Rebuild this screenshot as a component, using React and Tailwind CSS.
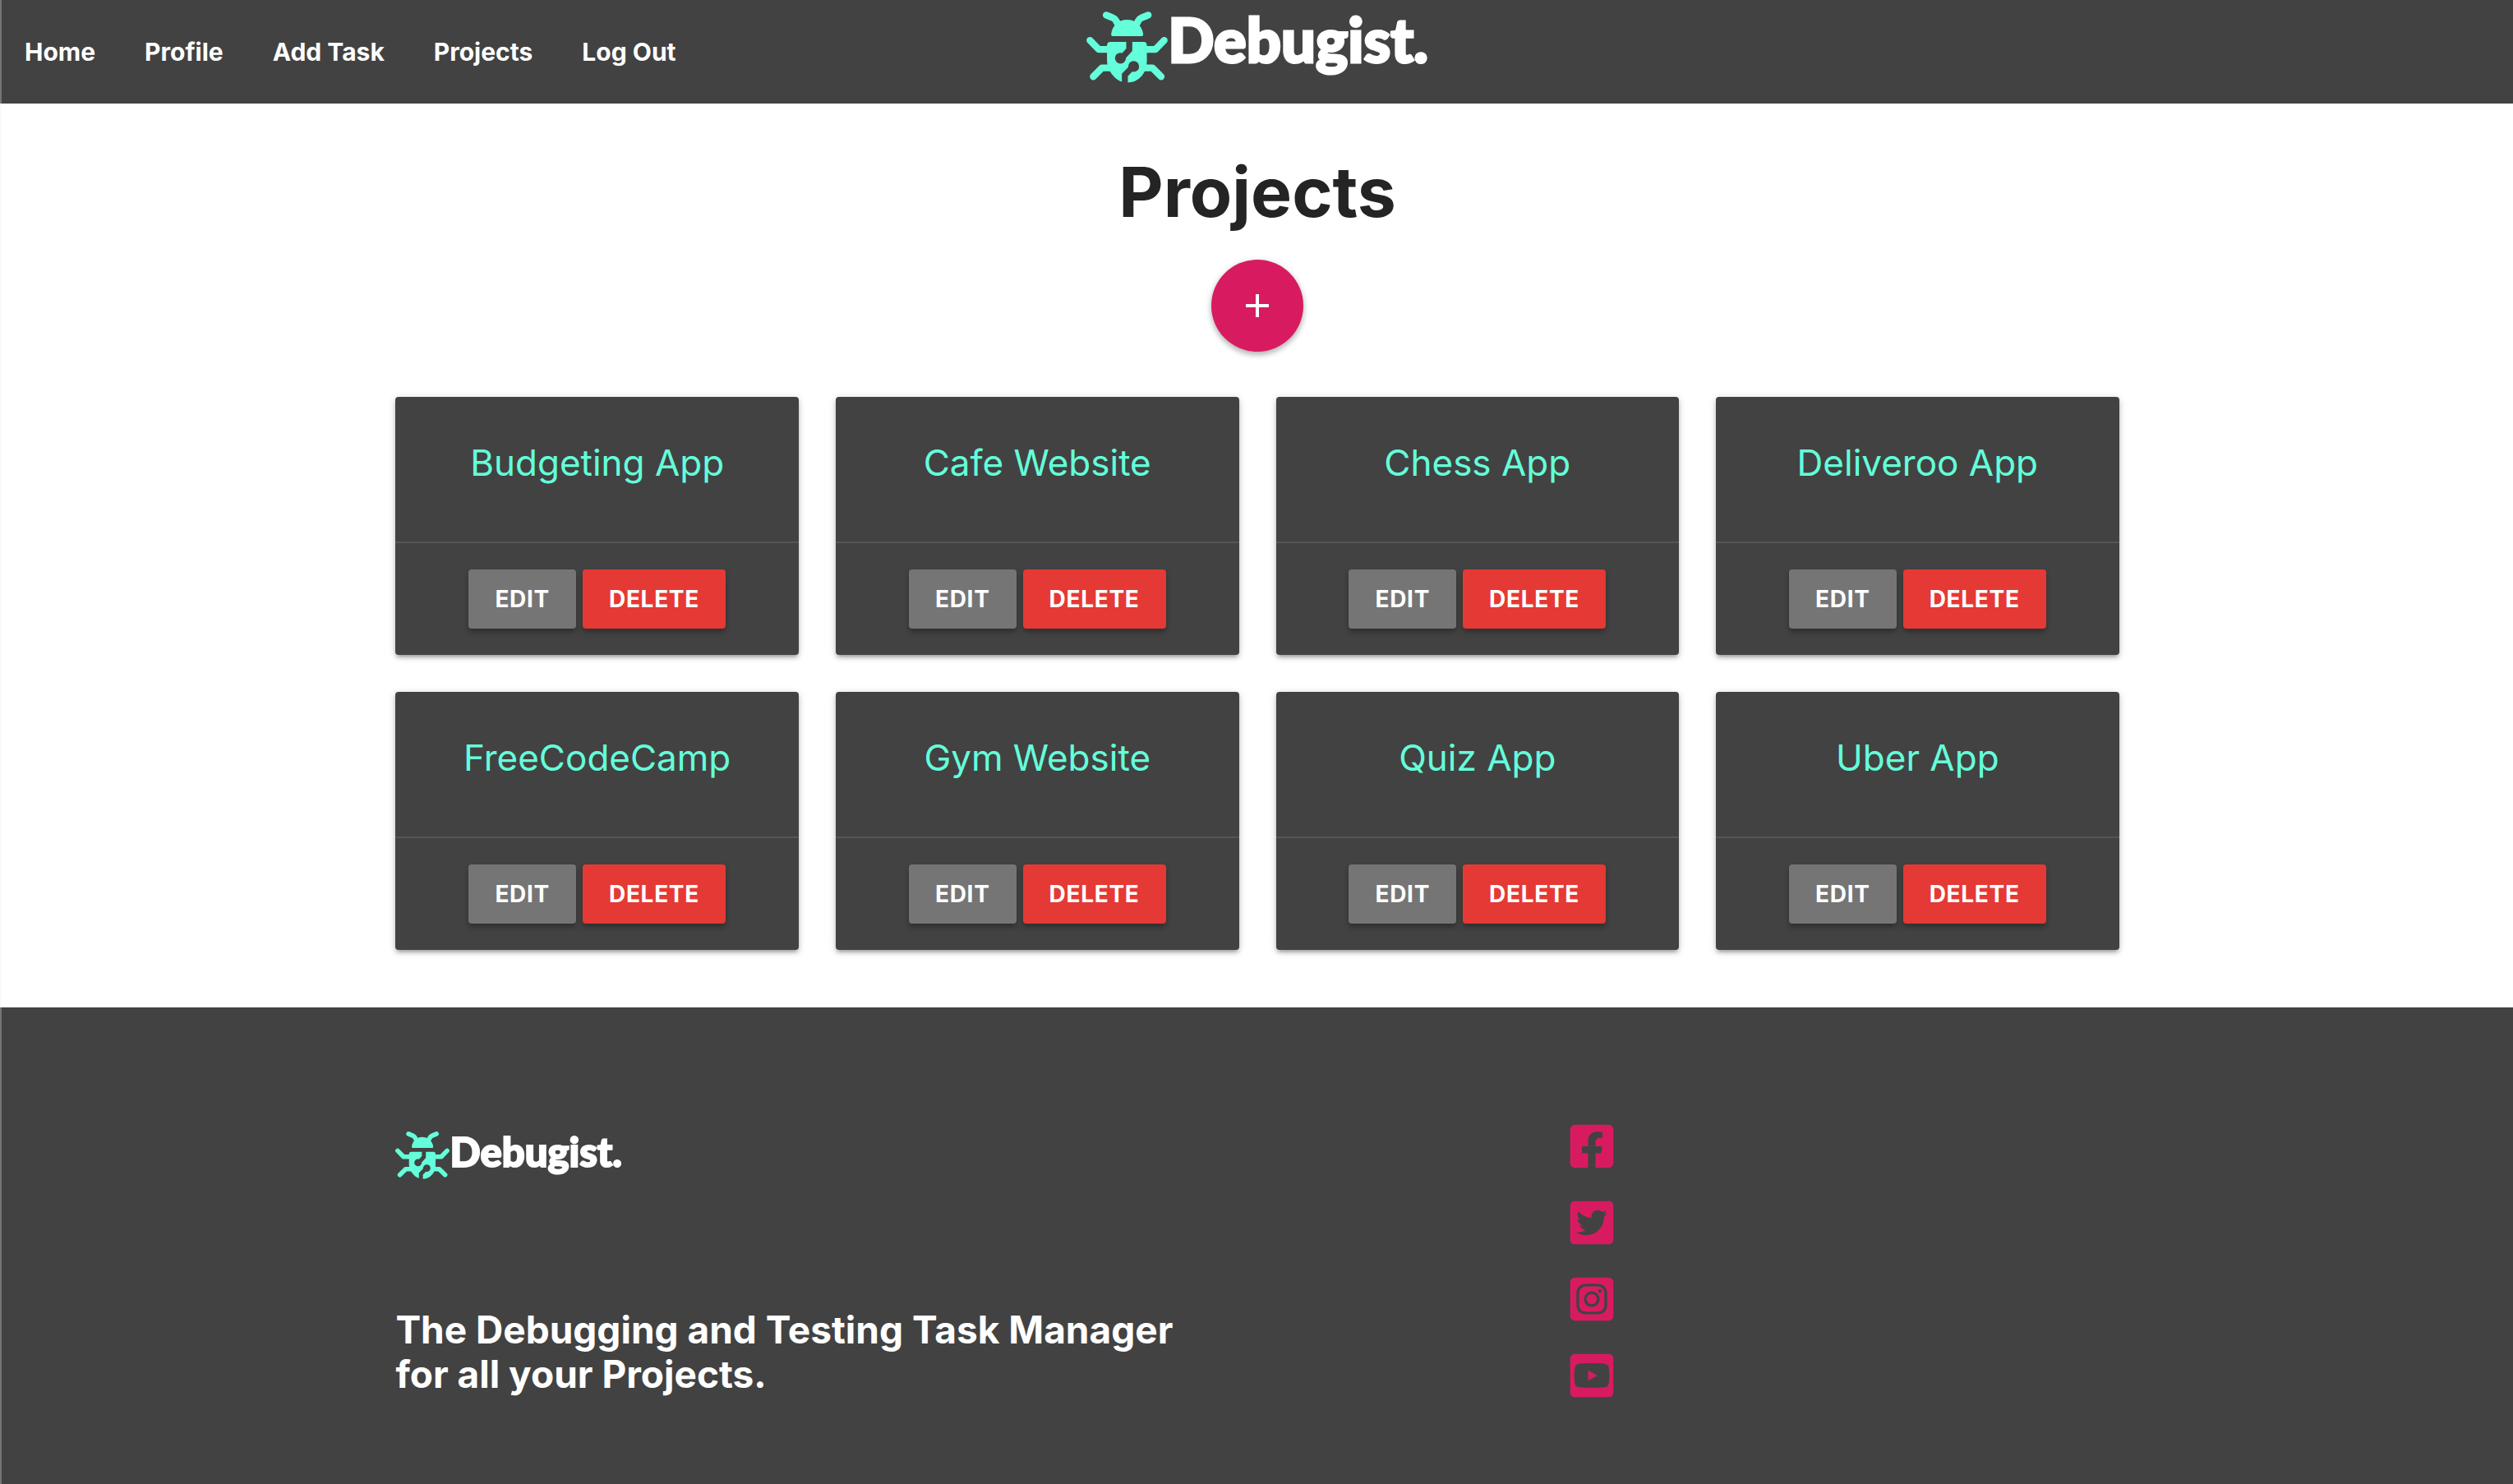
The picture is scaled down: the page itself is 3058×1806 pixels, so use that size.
import { FaFacebookSquare, FaTwitterSquare, FaInstagramSquare, FaYoutubeSquare } from "react-icons/fa";

const links = ["Home", "Profile", "Add Task", "Projects", "Log Out"];

const projects = [
  "Budgeting App",
  "Cafe Website",
  "Chess App",
  "Deliveroo App",
  "FreeCodeCamp",
  "Gym Website",
  "Quiz App",
  "Uber App",
];

const socials = [
  { name: "Facebook", Icon: FaFacebookSquare },
  { name: "Twitter", Icon: FaTwitterSquare },
  { name: "Instagram", Icon: FaInstagramSquare },
  { name: "YouTube", Icon: FaYoutubeSquare },
];

function Bug({ className }) {
  return (
    <svg viewBox="0 0 296 260" className={className} aria-hidden="true">
      <g fill="none" stroke="#64ffda" strokeWidth="25" strokeLinecap="round" strokeLinejoin="round">
        <path d="M72 13L96 23Q104 26 108 34L116 48" />
        <path d="M225 13L201 23Q193 26 189 34L181 48" />
        <path d="M13 105L45 138H90" />
        <path d="M283 105L251 138H206" />
        <path d="M25 237L57 205H90" />
        <path d="M272 237L240 205H206" />
      </g>
      <path
        fill="#64ffda"
        d="M90 84Q92 58 112 42Q126 30 148 30Q170 30 184 42Q204 58 207 84Q207 90 201 90H96Q90 90 90 84Z"
      />
      <path fill="#64ffda" d="M88 111H209Q220 111 220 124V180Q220 212 202 234Q180 259 148 259Q116 259 92 227Q75 204 75 180V124Q75 111 88 111Z" />
      <g fill="none" stroke="#424242" strokeWidth="22">
        <path d="M156 108V139L128 170" />
        <path d="M140 262V231L168 202" />
      </g>
      <g fill="#424242">
        <circle cx="124" cy="170" r="20" />
        <circle cx="172" cy="200" r="20" />
      </g>
    </svg>
  );
}

function Card({ title }) {
  return (
    <article className="rounded-sm bg-[#424242] text-center shadow-[0_4px_4px_rgba(0,0,0,0.14),0_6px_2px_-4px_rgba(0,0,0,0.12),0_2px_10px_rgba(0,0,0,0.2)]">
      <h2 className="px-6 pt-12 pb-16 text-[44px] leading-16 text-[#64ffda]">{title}</h2>
      <div className="flex justify-center gap-2 border-t-2 border-[#555555] py-8">
        <button className="h-18 rounded-sm bg-[#757575] px-8 text-[28px] font-bold tracking-wide text-white shadow-[0_4px_6px_rgba(0,0,0,0.3)]">
          EDIT
        </button>
        <button className="h-18 rounded-sm bg-[#e53935] px-8 text-[28px] font-bold tracking-wide text-white shadow-[0_4px_6px_rgba(0,0,0,0.3)]">
          DELETE
        </button>
      </div>
    </article>
  );
}

export default function App() {
  return (
    <div className="flex min-h-screen flex-col bg-white font-['Inter',sans-serif]">
      <header className="grid h-[126px] grid-cols-[1fr_auto_1fr] items-start border-l-2 border-[#757575] bg-[#424242]">
        <nav className="flex h-full items-center gap-[60px] pl-7 text-3xl font-bold text-white">
          {links.map((l) => (
            <a key={l} href="#" className="whitespace-nowrap">
              {l}
            </a>
          ))}
        </nav>
        <a href="#" aria-label="Debugist home" className="flex items-start pt-3">
          <Bug className="mt-[2px] w-[99px]" />
          <span className="font-['Lato',sans-serif] text-[74px] leading-[72px] font-black text-white [-webkit-text-stroke:3px_white]">
            Debugist.
          </span>
        </a>
      </header>

      <main className="border-l-2 border-gray-50">
        <div className="mx-auto w-[70%] px-[21px] pt-[58px] pb-[70px]">
          <h1 className="text-center text-[84px] leading-[100px] font-bold text-[#242424]">Projects</h1>
          <div className="mt-8 flex justify-center">
            <button
              aria-label="Add project"
              className="flex size-28 items-center justify-center rounded-full bg-[#d81b60] shadow-[0_4px_6px_rgba(0,0,0,0.2),0_2px_10px_rgba(0,0,0,0.16)]"
            >
              <svg viewBox="0 0 28 28" className="size-7" aria-hidden="true">
                <path d="M14 0V28M0 14H28" stroke="#fff" strokeWidth="4" />
              </svg>
            </button>
          </div>
          <section className="mt-[55px] grid grid-cols-4 gap-[45px]">
            {projects.map((p) => (
              <Card key={p} title={p} />
            ))}
          </section>
        </div>
      </main>

      <footer className="grow border-l-2 border-[#757575] bg-[#424242]">
        <div className="mx-auto grid w-[70%] grid-cols-[17fr_8fr] px-[21px] pt-[139px]">
          <div>
            <a href="#" aria-label="Debugist home" className="flex items-start pt-3">
              <Bug className="w-[66px]" />
              <span className="font-['Lato',sans-serif] text-[49px] leading-[48px] font-black text-white [-webkit-text-stroke:2px_white]">
                Debugist.
              </span>
            </a>
            <h2 className="mt-[156px] text-[46px] leading-[54px] font-bold text-white">
              The Debugging and Testing Task Manager
              <br />
              for all your Projects.
            </h2>
          </div>
          <ul className="flex flex-col gap-[33px]">
            {socials.map(({ name, Icon }) => (
              <li key={name}>
                <a href="#" aria-label={name} className="block w-fit text-[60px] text-[#d81b60]">
                  <Icon />
                </a>
              </li>
            ))}
          </ul>
        </div>
      </footer>
    </div>
  );
}
